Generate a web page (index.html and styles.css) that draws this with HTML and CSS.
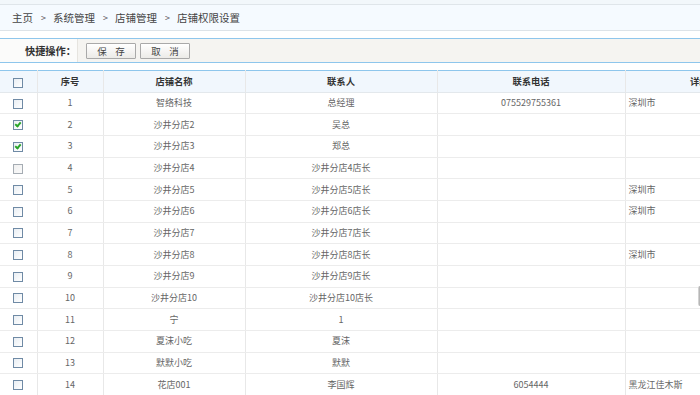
FILE: index.html
```html
<!DOCTYPE html>
<html lang="zh-CN">
<head>
<meta charset="utf-8">
<link rel="stylesheet" href="styles.css">
</head>
<body>
<div class="page">
  <div class="topstrip"></div>
  <div class="crumbs">
    <span>主页</span><span class="sep">&gt;</span><span>系统管理</span><span class="sep">&gt;</span><span>店铺管理</span><span class="sep">&gt;</span><span>店铺权限设置</span>
  </div>
  <div class="toolbar">
    <div class="tb-label">快捷操作：</div>
    <div class="tb-actions">
      <button class="btn">保&nbsp;&nbsp;&nbsp;&nbsp;存</button>
      <button class="btn">取&nbsp;&nbsp;&nbsp;&nbsp;消</button>
    </div>
  </div>
  <div class="tablewrap">
    <table class="grid">
      <colgroup>
        <col class="c-chk"><col class="c-no"><col class="c-name"><col class="c-contact"><col class="c-phone"><col class="c-addr">
      </colgroup>
      <thead>
        <tr><th><span class="cb"></span></th><th>序号</th><th>店铺名称</th><th>联系人</th><th>联系电话</th><th>详细地址</th></tr>
      </thead>
      <tbody>
        <tr><td><span class="cb"></span></td><td>1</td><td>智络科技</td><td>总经理</td><td>075529755361</td><td class="addr">深圳市</td></tr>
        <tr><td><span class="cb on"></span></td><td>2</td><td>沙井分店2</td><td>吴总</td><td></td><td class="addr"></td></tr>
        <tr><td><span class="cb on"></span></td><td>3</td><td>沙井分店3</td><td>郑总</td><td></td><td class="addr"></td></tr>
        <tr><td><span class="cb dis"></span></td><td>4</td><td>沙井分店4</td><td>沙井分店4店长</td><td></td><td class="addr"></td></tr>
        <tr><td><span class="cb"></span></td><td>5</td><td>沙井分店5</td><td>沙井分店5店长</td><td></td><td class="addr">深圳市</td></tr>
        <tr><td><span class="cb"></span></td><td>6</td><td>沙井分店6</td><td>沙井分店6店长</td><td></td><td class="addr">深圳市</td></tr>
        <tr><td><span class="cb"></span></td><td>7</td><td>沙井分店7</td><td>沙井分店7店长</td><td></td><td class="addr"></td></tr>
        <tr><td><span class="cb"></span></td><td>8</td><td>沙井分店8</td><td>沙井分店8店长</td><td></td><td class="addr">深圳市</td></tr>
        <tr><td><span class="cb"></span></td><td>9</td><td>沙井分店9</td><td>沙井分店9店长</td><td></td><td class="addr"></td></tr>
        <tr><td><span class="cb"></span></td><td>10</td><td>沙井分店10</td><td>沙井分店10店长</td><td></td><td class="addr"></td></tr>
        <tr><td><span class="cb"></span></td><td>11</td><td>宁</td><td>1</td><td></td><td class="addr"></td></tr>
        <tr><td><span class="cb"></span></td><td>12</td><td>夏沫小吃</td><td>夏沫</td><td></td><td class="addr"></td></tr>
        <tr><td><span class="cb"></span></td><td>13</td><td>默默小吃</td><td>默默</td><td></td><td class="addr"></td></tr>
        <tr><td><span class="cb"></span></td><td>14</td><td>花店001</td><td>李国辉</td><td>6054444</td><td class="addr">黑龙江佳木斯</td></tr>
      </tbody>
    </table>
  </div>
  <div class="edge-tab"></div>
</div>
</body>
</html>
```

FILE: styles.css
```css
html, body {
  margin: 0;
  padding: 0;
  background: #fff;
  overflow: hidden;
}
.page {
  width: 700px;
  height: 395px;
  overflow: hidden;
  position: relative;
  font-family: "Noto Sans CJK SC", "Noto Sans", sans-serif;
}
.topstrip {
  height: 4px;
  background: #f2f7fb;
  border-bottom: 1px solid #dfe5ea;
}
.crumbs {
  height: 26px;
  box-sizing: border-box;
  background: #f5faff;
  border-bottom: 1px solid #dde3e8;
  display: flex;
  align-items: center;
  padding-left: 12px;
  font-size: 10.5px;
  color: #444;
}
.crumbs .sep {
  margin: 0 7px 0 8px;
  font-size: 9px;
  color: #555;
}
.toolbar {
  margin-top: 7px;
  height: 25px;
  box-sizing: border-box;
  border-top: 1px solid #8ec6ec;
  border-bottom: 1px solid #8ec6ec;
  background: #f5f4f1;
  display: flex;
  align-items: stretch;
}
.tb-label {
  width: 78px;
  flex: none;
  box-sizing: border-box;
  padding-left: 25px;
  display: flex;
  align-items: center;
  white-space: nowrap;
  font-size: 10.2px;
  font-weight: bold;
  color: #333;
  background: #fbfbfa;
  border-right: 1px solid #e6e4df;
}
.tb-actions {
  display: flex;
  align-items: center;
  gap: 4px;
  padding-left: 8px;
}
.btn {
  width: 50px;
  height: 16px;
  box-sizing: border-box;
  padding: 0;
  margin: 0;
  border: 1px solid #a9a9a9;
  border-radius: 1px;
  background: linear-gradient(#ffffff, #ecebe8);
  font-family: "Noto Sans CJK SC", sans-serif;
  font-size: 9.5px;
  color: #444;
  line-height: 14px;
}
.tablewrap {
  margin-top: 7px;
  width: 820px;
}
.grid {
  border-collapse: collapse;
  table-layout: fixed;
  width: 792px;
  border-top: 1px solid #8ec6ec;
  font-size: 9px;
  color: #666;
}
.c-chk { width: 37px; }
.c-no { width: 66px; }
.c-name { width: 142px; }
.c-contact { width: 192px; }
.c-phone { width: 188px; }
.c-addr { width: 167px; }
.grid th, .grid td {
  height: 21.67px;
  padding: 0 3px;
  box-sizing: border-box;
  text-align: center;
  vertical-align: middle;
  border-left: 1px solid #e8e8e8;
  border-right: 1px solid #e8e8e8;
  border-bottom: 1px solid #ececec;
  white-space: nowrap;
  overflow: hidden;
  line-height: 12px;
}
.grid th:first-child, .grid td:first-child { border-left: none; }
.grid thead th {
  background: #f1f7fd;
  color: #333;
  font-weight: bold;
  font-size: 9.3px;
  border-bottom: 1px solid #e3e8ec;
}
.grid td.addr { text-align: left; }
.cb {
  display: inline-block;
  width: 10px;
  height: 10px;
  box-sizing: border-box;
  border: 1px solid #6f8aa5;
  background: linear-gradient(135deg, #e9eef3, #ffffff);
  vertical-align: middle;
  position: relative;
}
.cb.dis {
  border-color: #a5acb3;
  background: linear-gradient(135deg, #f0f0f0, #fafafa);
}
.cb.on::after {
  content: "";
  position: absolute;
  left: 2px;
  top: 0px;
  width: 2px;
  height: 4px;
  border: solid #2aa52a;
  border-width: 0 2px 2px 0;
  transform: rotate(40deg);
}
.edge-tab {
  position: absolute;
  right: 0;
  top: 286px;
  width: 2px;
  height: 20px;
  background: linear-gradient(90deg, #e0e0e0, #a8a8a8);
  border-radius: 2px 0 0 2px;
}
```
